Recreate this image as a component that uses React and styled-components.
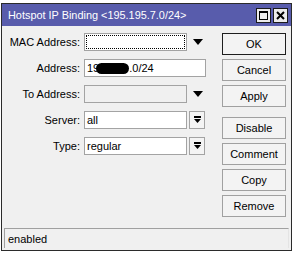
import React from "react";
import styled, { createGlobalStyle } from "styled-components";

const Global = createGlobalStyle`
  html, body { margin: 0; padding: 0; background: #ffffff; }
  body { font-family: "Liberation Sans", Arial, sans-serif; font-size: 11px; color: #000; }
`;

const Window = styled.div`
  margin: 3px 0 0 1px;
  width: 289px;
  height: 246px;
  border: 1px solid #2b2b2b;
  background: #f0f0f0;
  display: flex;
  flex-direction: column;
`;

const TitleBar = styled.div`
  height: 22px;
  background: #585cac;
  display: flex;
  align-items: center;
  padding: 0 3px 0 6px;
`;

const Title = styled.div`
  flex: 1;
  color: #ffffff;
  font-size: 10.9px;
  white-space: nowrap;
`;

const TitleButton = styled.div`
  width: 13px;
  height: 13px;
  border: 1px solid #1a1a1a;
  background: #ececec;
  margin-left: 2px;
  display: flex;
  align-items: center;
  justify-content: center;
`;

const Body = styled.div`
  flex: 1;
  display: flex;
  padding: 7px 5px 0 0;
`;

const Form = styled.div`
  flex: 1;
  display: flex;
  flex-direction: column;
  gap: 8px;
`;

const Row = styled.div`
  display: flex;
  align-items: center;
  height: 18px;
`;

const Label = styled.div`
  width: 78px;
  text-align: right;
  padding-right: 4px;
  white-space: nowrap;
`;

const Field = styled.div`
  box-sizing: border-box;
  width: ${(p) => p.$w}px;
  height: 18px;
  border: 1px solid #a3a3a3;
  background: ${(p) => (p.$disabled ? "#f0f0f0" : "#ffffff")};
  display: flex;
  align-items: center;
  padding: ${(p) => (p.$focus ? "1px" : "0 2px")};
  white-space: nowrap;
`;

const FocusRect = styled.div`
  flex: 1;
  align-self: stretch;
  border: 1px dotted #000;
`;

const Blot = styled.span`
  display: inline-block;
  width: 33px;
  height: 11px;
  border-radius: 6px;
  background: #000;
  margin-left: -3px;
  vertical-align: middle;
`;

const ArrowSlot = styled.div`
  width: 22px;
  display: flex;
  justify-content: center;
`;

const ComboButton = styled.div`
  box-sizing: border-box;
  width: 16px;
  height: 18px;
  margin-left: 2px;
  border: 1px solid #a3a3a3;
  background: #f4f4f4;
  display: flex;
  align-items: center;
  justify-content: center;
`;

const Buttons = styled.div`
  width: 64px;
  display: flex;
  flex-direction: column;
  gap: 4px;
`;

const Button = styled.div`
  box-sizing: border-box;
  height: 22px;
  border: 1px solid ${(p) => (p.$default ? "#1e1e1e" : "#a0a0a0")};
  background: #f3f3f3;
  display: flex;
  align-items: center;
  justify-content: center;
  margin-top: ${(p) => (p.$gap ? "6px" : "0")};
`;

const StatusBar = styled.div`
  height: 19px;
  margin: 0 2px 2px 2px;
  border-top: 1px solid #a0a0a0;
  border-left: 1px solid #a0a0a0;
  border-right: 1px solid #e4e4e4;
  display: flex;
  align-items: center;
  padding-left: 3px;
`;

const Arrow = () => (
  <svg width="10" height="6" viewBox="0 0 10 6">
    <polygon points="0,0 10,0 5,6" fill="#000" />
  </svg>
);

const ComboArrow = () => (
  <svg width="7" height="8" viewBox="0 0 7 8">
    <rect x="0" y="0" width="7" height="2" fill="#000" />
    <polygon points="0,3 7,3 3.5,7" fill="#000" />
  </svg>
);

export default function App() {
  return (
    <>
      <Global />
      <Window>
        <TitleBar>
          <Title>Hotspot IP Binding &lt;195.195.7.0/24&gt;</Title>
          <TitleButton>
            <svg width="9" height="9" viewBox="0 0 9 9">
              <rect x="0.5" y="0.5" width="8" height="8" fill="none" stroke="#000" />
              <rect x="0" y="0" width="9" height="2" fill="#000" />
            </svg>
          </TitleButton>
          <TitleButton>
            <svg width="9" height="9" viewBox="0 0 9 9">
              <path d="M1 1 L8 8 M8 1 L1 8" stroke="#000" strokeWidth="2" />
            </svg>
          </TitleButton>
        </TitleBar>
        <Body>
          <Form>
            <Row>
              <Label>MAC Address:</Label>
              <Field $w={103} $focus>
                <FocusRect />
              </Field>
              <ArrowSlot>
                <Arrow />
              </ArrowSlot>
            </Row>
            <Row>
              <Label>Address:</Label>
              <Field $w={122}>
                19<Blot />.0/24
              </Field>
            </Row>
            <Row>
              <Label>To Address:</Label>
              <Field $w={103} $disabled />
              <ArrowSlot>
                <Arrow />
              </ArrowSlot>
            </Row>
            <Row>
              <Label>Server:</Label>
              <Field $w={103}>all</Field>
              <ComboButton>
                <ComboArrow />
              </ComboButton>
            </Row>
            <Row>
              <Label>Type:</Label>
              <Field $w={103}>regular</Field>
              <ComboButton>
                <ComboArrow />
              </ComboButton>
            </Row>
          </Form>
          <Buttons>
            <Button $default>OK</Button>
            <Button>Cancel</Button>
            <Button>Apply</Button>
            <Button $gap>Disable</Button>
            <Button>Comment</Button>
            <Button>Copy</Button>
            <Button>Remove</Button>
          </Buttons>
        </Body>
        <StatusBar>enabled</StatusBar>
      </Window>
    </>
  );
}
